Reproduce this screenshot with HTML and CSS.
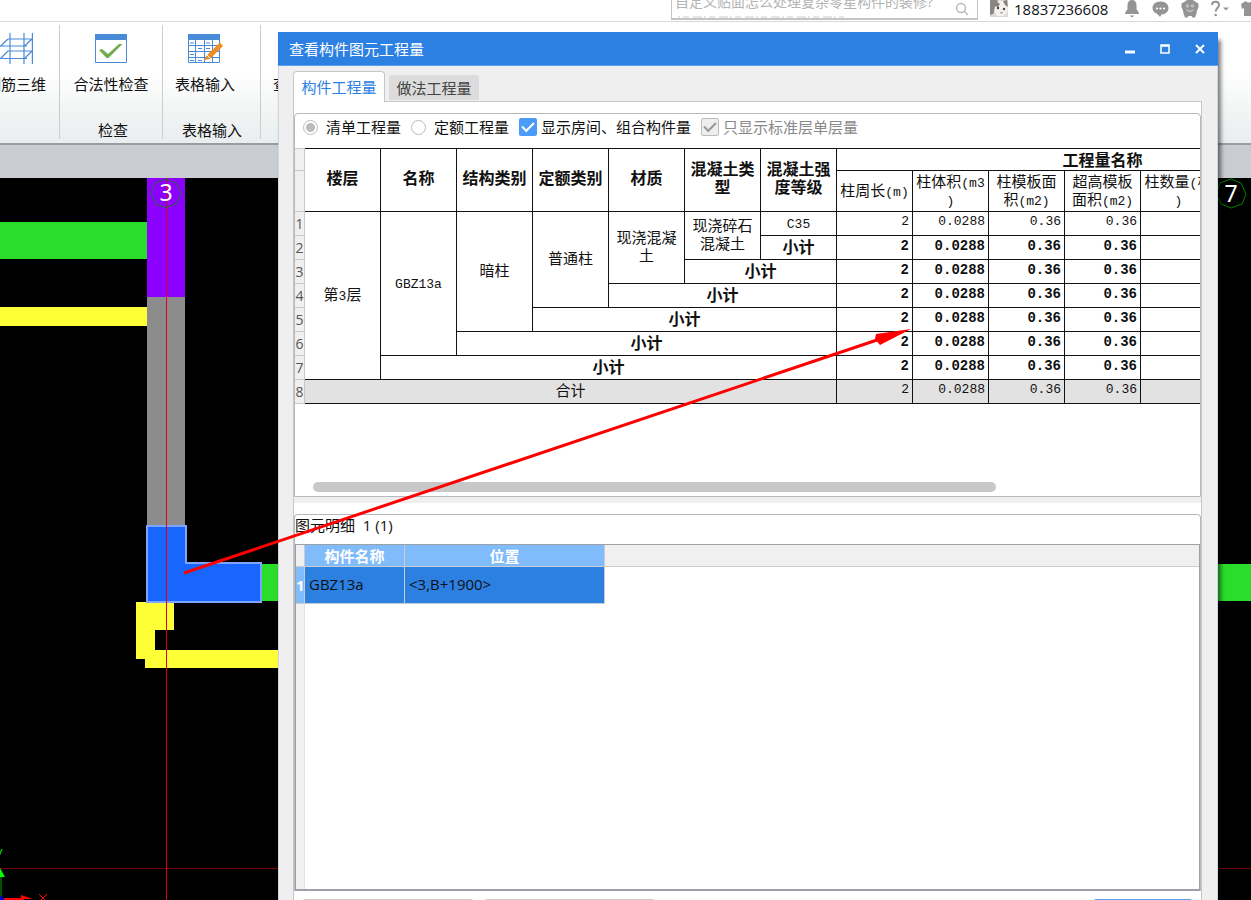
FILE: index.html
```html
<!DOCTYPE html>
<html lang="zh-CN">
<head>
<meta charset="utf-8">
<title>查看构件图元工程量</title>
<link rel="stylesheet" href="styles.css">
</head>
<body>
<div class="app">
  <header class="topbar">
    <div class="search">
      <input class="search-input" type="text" aria-label="搜索" placeholder="自定义贴面怎么处理复杂零星构件的装修?">
      <svg class="search-icon" width="14" height="14" viewBox="0 0 14 14"><circle cx="6" cy="6" r="4.5"/><path d="M9.3 9.3 13 13"/></svg>
      <svg class="search-next" width="166" height="2" viewBox="0 0 166 2"><path d="M0 1H166"/></svg>
    </div>
    <svg class="avatar" width="18" height="17" viewBox="0 0 18 17"><rect width="18" height="17" fill="#dedad6"/><path d="M0 0h8L5 4l1 5-3 5-3 1z" fill="#8b8680"/><path d="M6 3 10 1h6l2 4-1 8-4 3H7L4 11z" fill="#f4f2f0"/><path d="M6 1 10 4 8 7 4 6zM13 1l4-1 1 7-3-2z" fill="#8a817c"/><circle cx="8" cy="8" r="1.200" fill="#444"/><circle cx="14" cy="9" r="1.200" fill="#444"/><path d="m10 12 3 0-1.500 2z" fill="#c77"/></svg>
    <span class="phone">18837236608</span>
    <div class="tools">
      <svg width="16" height="18" viewBox="0 0 16 18"><path d="M8 0C5 0 3.500 2 3.500 5v4L1 13v1h14v-1l-2.500-4V5C12.500 2 11 0 8 0zM5.500 15.500h5L8 17.500z"/></svg>
      <svg width="17" height="18" viewBox="0 0 17 18"><path d="M8.500 1.500c4.700 0 8 2.800 8 6.500s-3 6.300-7 6.500L8 17l-2.500-3C2.500 13 .5 11 .5 8c0-3.700 3.300-6.500 8-6.500z"/><g fill="#fff"><circle cx="5" cy="8.500" r="1.100"/><circle cx="8.500" cy="8.500" r="1.100"/><circle cx="12" cy="8.500" r="1.100"/></g></svg>
      <svg width="18" height="18" viewBox="0 0 18 18"><path d="M4 1.500 6 0h6l2 1.500 3.500 2v4l-1.500 3-.5 3-1.500 4h-2.500L10.500 16h-3l-1 1.500H4l-1.500-4-.5-3-1.500-3v-4z"/><circle cx="6.500" cy="6" r="1.400" fill="#ddd"/><circle cx="11.500" cy="6" r="1.400" fill="#ddd"/><circle cx="6.500" cy="6" r=".7"/><circle cx="11.500" cy="6" r=".7"/><path d="M5.500 9.500c1.500 2.300 5.500 2.300 7 0" fill="none" stroke="#ddd"/></svg>
      <svg width="18" height="18" viewBox="0 0 18 18"><path d="M1 5c0-4.500 7-4.500 7 0 0 3-3.300 3-3.300 6.500" fill="none" stroke="#949494" stroke-width="2"/><circle cx="4.700" cy="15" r="1.300"/><path d="M12 7.500h6l-3 3z"/></svg>
      <svg width="18" height="18" viewBox="0 0 18 18"><path d="m0 4 5-3c1 2 5 2 6 0l7 3v4l-3 1v7H3V8L1 9z"/></svg>
    </div>
  </header>

  <nav class="ribbon">
    <section class="ribbon-group ribbon-group-first">
      <button class="ribbon-button" type="button">
        <svg width="34" height="32" viewBox="0 0 34 32"><g fill="none" stroke="#4a8bd8" stroke-width="1.200"><path d="M11 0v31M25 0v31M33.400 0v31M9 6h25M9 18h25M0 13h28M0 25.500h28M9 6l-8 7.500M9 18 1 26M33 6l-8 7.500M33 18l-8 8"/></g></svg>
        <span>钢筋三维</span>
      </button>
    </section>
    <section class="ribbon-group ribbon-group-check">
      <button class="ribbon-button" type="button">
        <svg width="34" height="32" viewBox="0 0 34 32"><path d="M1.500 1.500h31v28h-31z" fill="#fff" stroke="#4a8bd8"/><path d="M1 1h32v6H1z" fill="#4a8bd8"/><path d="m5 17 3-1 6 5L25 11h3.500L14.500 25h-2z" fill="#71ab50"/></svg>
        <span>合法性检查</span>
      </button>
      <span class="ribbon-label">检查</span>
    </section>
    <section class="ribbon-group ribbon-group-table">
      <button class="ribbon-button" type="button">
        <svg width="36" height="32" viewBox="0 0 36 32"><path d="M1.500 1.500h31v28h-31z" fill="#fff" stroke="#4a8bd8"/><path d="M1 1h32v6H1z" fill="#4a8bd8"/><path d="M1 12.500h31M1 18.500h31M1 24.500h31M8.500 7v23M17.500 7v23M25.500 7v23" fill="none" stroke="#4a8bd8"/><path d="M3 10h4M3 21.500h4M3 27.500h4M11 27.500h4M11 15.500h4M19 10h4M19 15.500h4" stroke="#4a8bd8"/><path d="M33 9.500 36 13 23 26l-6 1 3-5z" fill="#ee8d22"/><path d="m20 22 3.500 3.500" stroke="#fff"/></svg>
        <span>表格输入</span>
      </button>
      <span class="ribbon-label">表格输入</span>
    </section>
    <section class="ribbon-group ribbon-group-last">
      <button class="ribbon-button" type="button"><span>查</span></button>
    </section>
  </nav>
  <div class="strip"></div>

  <main class="canvas">
    <svg class="drawing" width="100%" height="100%">
      <path d="M0 44h147v37H0zM262 386h16v37h-16zM1218 386h900v37h-900z" fill="#2bdd2b"/>
      <path d="M0 129h147v19H0zM136 424h38v28h-19v20h123v18H145v-9h-9z" fill="#ffff37"/>
      <path d="M147 0h38v119h-38z" fill="#8c00ff"/>
      <path d="M147 119h38v229h-38z" fill="#8c8c8c"/>
      <path d="M147 348h39v37h75v39H147z" fill="#1966ff" stroke="#7da5ff" stroke-width="2"/>
      <path d="M0 690.500h4000" stroke="#780000"/>
      <path d="M166.500 0v722" stroke="#e00016"/>
      <path d="m166 1 10 4 5 10-4 10-11 5-10-4-5-11 4-10z" fill="none" stroke="#256b37"/>
      <path d="m1231 1 10 4 5 11-4 10-11 4-10-4-5-10 4-11z" fill="none" stroke="#008000"/>
      <text class="axis" x="166" y="23">3</text>
      <text class="axis" x="1231" y="24">7</text>
      <path d="M1 694v28" stroke="#00a000"/><path d="m-4 699 4-9 5 9z" fill="#0f0"/><path d="m-3 671 2 5 3-5-3 8" stroke="#0c0" fill="none"/>
      <path d="M4 721h20" stroke="#f00" stroke-width="2"/><path d="m21 717 12 4H21z" fill="#f00"/><path d="m39 716 8 8m0-8-8 8" stroke="#f00"/><circle cx="0" cy="722" r="4" fill="#00c"/>
    </svg>
  </main>

  <div class="dialog" role="dialog" aria-labelledby="dialog-title">
    <div class="titlebar">
      <h1 class="title" id="dialog-title">查看构件图元工程量</h1>
      <button class="window-button" type="button" aria-label="最小化"><svg width="12" height="12" viewBox="0 0 12 12"><path d="M1 9h10" stroke-width="3"/></svg></button>
      <button class="window-button" type="button" aria-label="最大化"><svg width="12" height="12" viewBox="0 0 12 12"><path d="M2 2h8v8H2zM2 3h8" stroke-width="1.500"/></svg></button>
      <button class="window-button" type="button" aria-label="关闭"><svg width="12" height="12" viewBox="0 0 12 12"><path d="m2 2 8 8m0-8-8 8" stroke-width="2"/></svg></button>
    </div>
    <div class="dialog-body">
      <div class="tabs" role="tablist">
        <button class="tab tab-active" type="button" role="tab" aria-selected="true">构件工程量</button>
        <button class="tab" type="button" role="tab" aria-selected="false">做法工程量</button>
      </div>
      <div class="panel">
        <section class="group">
          <div class="options">
            <label class="option"><input class="radio" type="radio" name="mode" checked>清单工程量</label>
            <label class="option"><input class="radio" type="radio" name="mode">定额工程量</label>
            <label class="option option-check"><input class="check" type="checkbox" checked>显示房间、组合构件量</label>
            <label class="option option-check option-off"><input class="check" type="checkbox" checked disabled>只显示标准层单层量</label>
          </div>
          <div class="table-area">
            <table class="quantities">
              <colgroup><col class="col-index"><col span="14" class="col-data"></colgroup>
              <thead>
                <tr class="row-top"><th class="index"></th><th rowspan="2">楼层</th><th rowspan="2">名称</th><th rowspan="2">结构类别</th><th rowspan="2">定额类别</th><th rowspan="2">材质</th><th rowspan="2">混凝土类<br>型</th><th rowspan="2">混凝土强<br>度等级</th><th class="caption" colspan="7">工程量名称</th></tr>
                <tr class="row-sub"><th class="index"></th><th>柱周长<span class="latin">(m)</span></th><th>柱体积<span class="latin">(m3<br>)</span></th><th>柱模板面<br>积<span class="latin">(m2)</span></th><th>超高模板<br>面积<span class="latin">(m2)</span></th><th>柱数量<span class="latin">(</span>根<br><span class="latin">)</span></th><th></th><th></th></tr>
              </thead>
              <tbody>
                <tr><th class="index">1</th><td rowspan="7">第<span class="latin">3</span>层</td><td rowspan="6"><span class="latin">GBZ13a</span></td><td rowspan="5">暗柱</td><td rowspan="4">普通柱</td><td rowspan="3">现浇混凝<br>土</td><td rowspan="2">现浇碎石<br>混凝土</td><td><span class="latin">C35</span></td><td class="num">2</td><td class="num">0.0288</td><td class="num">0.36</td><td class="num">0.36</td><td></td><td></td><td></td></tr>
                <tr class="subtotal"><th class="index">2</th><td>小计</td><td class="num">2</td><td class="num">0.0288</td><td class="num">0.36</td><td class="num">0.36</td><td></td><td></td><td></td></tr>
                <tr class="subtotal"><th class="index">3</th><td colspan="2">小计</td><td class="num">2</td><td class="num">0.0288</td><td class="num">0.36</td><td class="num">0.36</td><td></td><td></td><td></td></tr>
                <tr class="subtotal"><th class="index">4</th><td colspan="3">小计</td><td class="num">2</td><td class="num">0.0288</td><td class="num">0.36</td><td class="num">0.36</td><td></td><td></td><td></td></tr>
                <tr class="subtotal"><th class="index">5</th><td colspan="4">小计</td><td class="num">2</td><td class="num">0.0288</td><td class="num">0.36</td><td class="num">0.36</td><td></td><td></td><td></td></tr>
                <tr class="subtotal"><th class="index">6</th><td colspan="5">小计</td><td class="num">2</td><td class="num">0.0288</td><td class="num">0.36</td><td class="num">0.36</td><td></td><td></td><td></td></tr>
                <tr class="subtotal"><th class="index">7</th><td colspan="6">小计</td><td class="num">2</td><td class="num">0.0288</td><td class="num">0.36</td><td class="num">0.36</td><td></td><td></td><td></td></tr>
                <tr class="total"><th class="index">8</th><td colspan="7">合计</td><td class="num">2</td><td class="num">0.0288</td><td class="num">0.36</td><td class="num">0.36</td><td></td><td></td><td></td></tr>
              </tbody>
            </table>
            <div class="scroll-track"><div class="scroll-thumb"></div></div>
          </div>
        </section>
        <div class="splitter"></div>
        <section class="group group-detail">
          <h2 class="detail-title">图元明细&nbsp; 1 (1)</h2>
          <div class="detail-box">
            <table class="detail">
              <colgroup><col class="col-detail-index"><col class="col-name"><col class="col-place"><col></colgroup>
              <thead><tr><th></th><th class="head">构件名称</th><th class="head">位置</th><th></th></tr></thead>
              <tbody><tr><th class="detail-index">1</th><td>GBZ13a</td><td>&lt;3,B+1900&gt;</td></tr></tbody>
            </table>
            <div class="gutter"></div>
          </div>
        </section>
        <footer class="actions">
          <button class="action" type="button" aria-label="设置"></button>
          <button class="action" type="button" aria-label="导出"></button>
          <button class="action action-main" type="button" aria-label="退出"></button>
        </footer>
      </div>
    </div>
  </div>

  <svg class="callout" width="100%" height="100%"><path d="M184 573 880 339" stroke="#f00" stroke-width="3"/><path d="m911 329-35 5-1 5 5 6z" fill="#f00"/></svg>
</div>
</body>
</html>
```
FILE: styles.css
```css
* { box-sizing: border-box; }

body {
  margin: 0;
  font: 15px/20px "Open Sans", "Noto Sans CJK SC", sans-serif;
  color: #111;
}

button, input { font: inherit; color: inherit; }
button { padding: 0; border: 0; background: none; }
svg { display: block; flex: none; }

.app {
  position: relative;
  display: flex;
  flex-direction: column;
  height: 100vh;
  overflow: hidden;
  background: #fff;
}

/* Top bar */
.topbar {
  display: flex;
  flex: none;
  justify-content: flex-end;
  align-items: flex-start;
  height: 22px;
  overflow: hidden;
  border-bottom: 1px solid #d8d8d8;
}
.search {
  position: relative;
  display: flex;
  width: 307px;
  height: 20px;
  margin-right: 12px;
  padding: 0 8px 0 3px;
  border: 1px solid #c4c4c4;
  border-width: 0 1px 2px;
  overflow: hidden;
}
.search-input {
  flex: 1;
  min-width: 0;
  height: 20px;
  margin-top: -8px;
  padding: 0;
  border: 0;
  outline: 0;
  background: none;
  font-size: 14px;
}
.search-input::placeholder { color: #b4b4b4; opacity: 1; }
.search-icon { margin-top: 2px; fill: none; stroke: #bbb; stroke-width: 1.5; }
.search-next {
  position: absolute;
  left: 6px;
  bottom: 0;
  stroke: #ccc;
  stroke-width: 1;
  stroke-dasharray: 2 3 6 4 9 2;
}
.avatar { margin-right: 6px; }
.phone { width: 98px; height: 18px; line-height: 18px; }
.tools { display: flex; gap: 12px; margin: 0 -8px 0 12px; fill: #949494; }

/* Ribbon */
.ribbon {
  display: flex;
  flex: none;
  height: 123px;
  padding: 3px 0 4px;
  border-bottom: 2px solid #999da0;
  background: linear-gradient(#fff 40%, #e9eded);
}
.ribbon-group {
  display: flex;
  flex-direction: column;
  align-items: center;
  justify-content: space-between;
  padding-top: 8px;
  border-right: 1px solid #ccc;
}
.ribbon-group-first { width: 60px; align-items: flex-start; }
.ribbon-group-first .ribbon-button { align-items: center; margin-left: -14px; }
.ribbon-group-check { width: 103px; }
.ribbon-group-check .ribbon-label { margin-left: 4px; }
.ribbon-group-table { width: 98px; padding-right: 13px; }
.ribbon-group-table .ribbon-label { margin-right: -14px; }
.ribbon-group-last { flex: 1; align-items: flex-start; padding-left: 12px; border-right: 0; }
.ribbon-group-last .ribbon-button { margin-top: 41px; }
.ribbon-button {
  display: flex;
  flex-direction: column;
  align-items: center;
  gap: 9px;
  white-space: nowrap;
}
.ribbon-label { line-height: 18px; }

.strip { flex: none; height: 33px; background: #c9ccd1; }

/* Model view */
.canvas { flex: 1; min-height: 0; background: #000; }
.axis { fill: #fff; font: 23px "Noto Sans", sans-serif; text-anchor: middle; }

/* Dialog window */
.dialog {
  position: absolute;
  top: 32px;
  right: 33px;
  bottom: 0;
  left: 278px;
  display: flex;
  flex-direction: column;
  background: #efefef;
  box-shadow: 3px 8px 4px rgba(0, 0, 0, .5);
}
.titlebar {
  display: flex;
  flex: none;
  align-items: center;
  gap: 23px;
  height: 34px;
  padding: 0 12px 0 11px;
  border-bottom: 1px solid #5b9ff0;
  background: #2c80e2;
  color: #fff;
}
.title { flex: 1; margin: 0; font-size: 15px; font-weight: 400; }
.window-button svg { fill: none; stroke: #fff; }
.dialog-body {
  display: flex;
  flex: 1;
  flex-direction: column;
  min-height: 0;
  padding: 5px 15px 0 14px;
  border: 1px solid #d0d4e0;
  border-width: 0 1px;
}

.tabs { display: flex; align-items: flex-end; gap: 4px; height: 30px; }
.tab {
  width: 90px;
  height: 25px;
  margin-bottom: 1px;
  border-radius: 3px 3px 0 0;
  background: #dcdcdc;
  color: #444;
}
.tab-active {
  position: relative;
  width: 92px;
  height: 31px;
  margin-bottom: -1px;
  border: 1px solid #c4c6ca;
  border-bottom: 0;
  border-radius: 4px 4px 0 0;
  background: #fff;
  color: #2c80e2;
}
.panel {
  display: flex;
  flex: 1;
  flex-direction: column;
  min-height: 0;
  padding-top: 11px;
  border: 1px solid #c4c6ca;
  border-bottom: 0;
  background: #fff;
}

.group {
  flex: none;
  border: 1px solid #b6b9bd;
  border-radius: 4px 4px 0 0;
  overflow: hidden;
}
.options { display: flex; align-items: center; gap: 10px; height: 34px; padding: 0 8px 8px; }
.option { display: flex; align-items: center; gap: 8px; white-space: nowrap; }
.option-check { gap: 4px; }
.option-off { color: #888; }
.radio, .check { appearance: none; flex: none; margin: 0; }
.radio {
  width: 15px;
  height: 15px;
  border: 1px solid #bbb;
  border-radius: 50%;
  background: #fff;
}
.radio:checked { background: radial-gradient(circle, #bbb 4px, #fff 5px); }
.check {
  display: grid;
  place-items: center;
  width: 18px;
  height: 18px;
  border-radius: 2px;
  background: #4a9cf8;
}
.check::before {
  content: "";
  width: 10px;
  height: 5px;
  margin-bottom: 4px;
  border: 2px solid #fff;
  border-width: 0 0 2px 2px;
  transform: rotate(-45deg);
}
.check:disabled { border: 1px solid #bbb; background: #eee; }
.check:disabled::before { border-color: #999; }

/* Quantity table */
.table-area { overflow: hidden; }
.quantities {
  width: 1074px;
  table-layout: fixed;
  border-collapse: separate;
  border-spacing: 0;
  font-family: "Noto Sans CJK SC", sans-serif;
  line-height: 18px;
}
.col-index { width: 10px; }
.col-data { width: 76px; }
.quantities tr { height: 24px; }
.quantities .row-top { height: 23px; }
.quantities .row-sub { height: 41px; }
.quantities th, .quantities td {
  padding: 0 0 3px;
  border: 1px solid #111;
  border-width: 0 1px 1px 0;
  text-align: center;
  white-space: nowrap;
}
.quantities .row-top th { padding-bottom: 6px; border-top-width: 1px; font-size: 16px; }
.quantities .row-top .caption { padding-bottom: 2px; }
.quantities .row-sub th { padding-bottom: 2px; font-weight: 400; }
.quantities th.index, .quantities .row-top th.index {
  padding: 0;
  border-color: #c8c8c8;
  background: #f0f0f0;
  color: #555;
  font: 14px/18px "Open Sans", sans-serif;
}
.quantities .latin { font-family: "Liberation Mono", monospace; font-size: 13px; line-height: 12px; }
.quantities td.num {
  padding-right: 3px;
  text-align: right;
  font-family: "Liberation Mono", monospace;
  font-size: 13px;
}
.quantities .subtotal td { font-size: 16px; font-weight: 700; }
.quantities .subtotal td.num { font-size: 14px; }
.total td { background: #e2e2e2; }

.scroll-track { padding: 78px 204px 4px 18px; }
.scroll-thumb { height: 10px; border-radius: 5px; background: #c8c8c8; }
.splitter { flex: none; height: 6px; margin-bottom: 11px; background: #efefef; }

/* Element detail */
.group-detail { display: flex; flex: 1; flex-direction: column; min-height: 0; border-bottom: 0; }
.detail-title { height: 29px; margin: 0; font-size: 15px; font-weight: 400; }
.detail-box {
  display: flex;
  flex: 1;
  flex-direction: column;
  min-height: 0;
  border: 2px solid #9da1a7;
  border-width: 1px 1px 2px;
}
.detail { width: 100%; table-layout: fixed; border-collapse: separate; border-spacing: 0; }
.col-detail-index { width: 9px; }
.col-name { width: 100px; }
.col-place { width: 200px; }
.detail th, .detail td {
  padding: 0 4px 2px;
  border: 1px solid #c8cdd4;
  border-width: 0 1px 1px 0;
  text-align: left;
}
.detail thead th { height: 22px; padding-bottom: 0; background: #f0f0f0; }
.detail thead th:last-child { border-right: 0; }
.detail thead .head { background: #80bbfb; color: #fff; text-align: center; }
.detail td { height: 37px; background: #2c80e2; }
.detail .detail-index { padding: 0; background: #80bbfb; color: #fff; }
.gutter { flex: 1; width: 9px; border-right: 1px solid #e4e4e4; background: #f0f0f0; }

.actions {
  display: flex;
  flex: none;
  gap: 10px;
  height: 9px;
  padding: 8px 8px 0;
  overflow: hidden;
}
.action { width: 172px; height: 28px; flex: none; border: 1px solid #ccc; border-radius: 3px; }
.action-main { width: 100px; margin-left: auto; border-color: #5b9ff0; }

/* Annotation arrow above the windows */
.callout { position: absolute; inset: 0; pointer-events: none; }
```
